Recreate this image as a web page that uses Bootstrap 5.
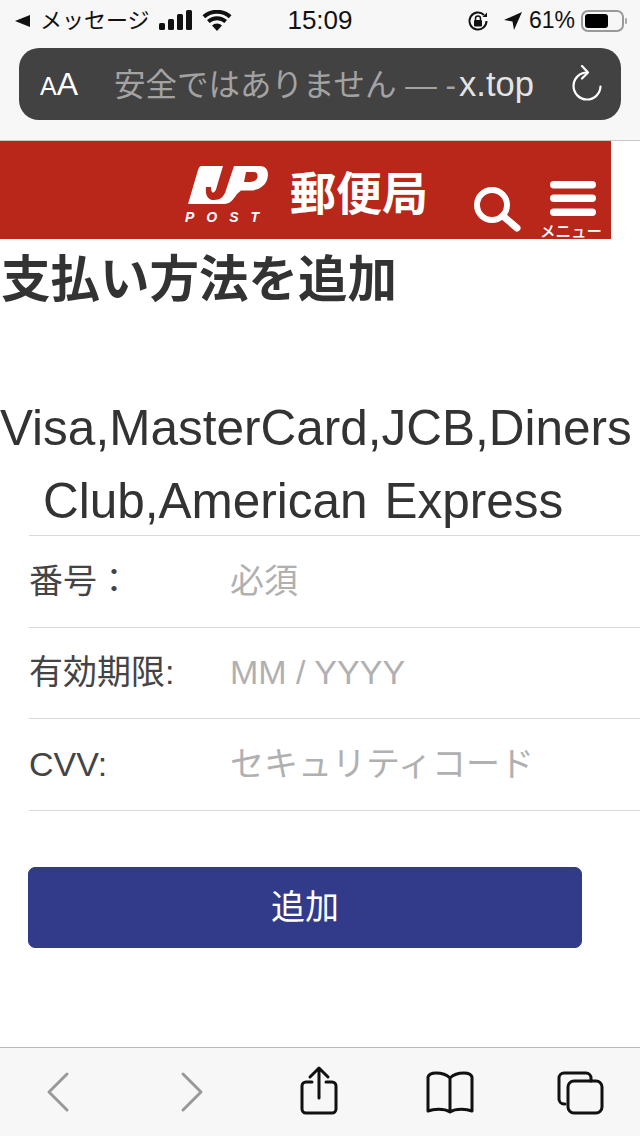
<!DOCTYPE html>
<html lang="ja">
<head>
  <meta charset="UTF-8" />
  <title>支払い方法を追加</title>
  <link href="https://cdn.jsdelivr.net/npm/bootstrap@5.3.0/dist/css/bootstrap.min.css" rel="stylesheet" />
  <style>
    html, body { height: 1136px; overflow: hidden; }
    body {
      width: 640px;
      font-family: "Liberation Sans", "Noto Sans CJK JP", sans-serif;
      color: #333;
      background: #fff;
    }
    .ios-top { height: 141px; background: #f7f7f7; border-bottom: 1px solid #c8c8c8; }
    .status-row { height: 48px; font-size: 23px; color: #111; padding: 0 0 7px 15px; }
    .status-left { width: 231px; gap: 9px; font-size: 22px; }
    .status-back { gap: 10px; white-space: nowrap; }
    .status-time { width: 148px; font-size: 26px; text-align: center; font-weight: 500; }
    .status-right { gap: 6px; margin-right: 13px; }
    .url-pill {
      height: 72px; margin: 0 19px; border-radius: 20px; background: #424242;
      padding: 0 18px 0 21px; font-size: 31.500px; color: #a3a3a3;
    }
    .url-aa { width: 74px; color: #fff; line-height: 1; font-size: 32px; }
    .url-aa small { font-size: 25px; }
    .url-text { padding-top: 2px; }
    .url-domain { color: #e4e4e4; font-size: 34.500px; margin-left: 3px; }
    .post-header { width: 611px; height: 98px; background: #b9261a; color: #fff; }
    .post-logo { margin-left: 180px; width: 92px; margin-top: 17px; }
    .post-word { font-size: 14px; font-weight: 700; font-style: italic; letter-spacing: 12px; line-height: 14px; margin: 3px 0 0 5px; white-space: nowrap; }
    .post-name { font-size: 46px; font-weight: 700; margin-left: 18px; line-height: 1; padding-top: 8px; width: 138px; white-space: nowrap; }
    .search-icon { margin-top: 45px; }
    .menu-box { width: 66px; margin: 40px 5px 0 19px; }
    .menu-label { font-size: 15.500px; line-height: 1; display: block; white-space: nowrap; margin: 7px 4px 0 0; font-weight: 500; }
    .page-title { font-size: 49.500px; font-weight: 700; line-height: 1; margin: 16px 0 0 1px; color: #333; }
    .card-types { font-size: 49.500px; line-height: 73px; color: #333; margin-top: 86px; height: 137px; white-space: nowrap; }
    .card-line-two { padding-left: 43px; word-spacing: 3px; }
    .pay-form { margin-left: 29px; margin-top: 7px; }
    .pay-row { height: 92px; border-top: 1px solid #d9d9d9; font-size: 34px; color: #444; }
    .pay-row + .pay-row { height: 91px; }
    .pay-row:last-of-type { border-bottom: 1px solid #d9d9d9; height: 93px; }
    .pay-row label { width: 201px; margin: 0; }
    .pay-row input { border: 0; outline: 0; padding: 0; flex: 1; min-width: 0; font-size: 34px; background: transparent; color: #444; }
    .pay-row input::placeholder { color: #b0b0b0; opacity: 1; }
    .add-btn {
      display: block; width: 554px; height: 81px; margin: 56px 0 0 -1px; border-radius: 7px;
      background: #323b8a; border: 1px solid #323b8a; color: #fff; font-size: 34px; padding: 0;
    }
    .add-btn:hover { background: #323b8a; color: #fff; }
    .ios-bottom { height: 89px; background: #f7f7f7; border-top: 1px solid #b8b8b8; }
    .tool-back { margin-left: 40px; }
    .tool-next { margin-left: 92px; }
    .tool-share { margin-left: 86px; }
    .tool-book { margin-left: 82px; }
    .tool-tabs { margin-left: 80px; }
  </style>
</head>
<body class="d-flex flex-column">
  <div class="ios-top">
    <div class="status-row d-flex align-items-center">
      <div class="status-left d-flex align-items-center">
        <span class="status-back d-flex align-items-center">
          <svg width="15" height="12" viewBox="0 0 15 12" fill="#111"><path d="M0 6l15-6v12z"/></svg>
          メッセージ
        </span>
        <svg width="34" height="21" viewBox="0 0 34 21" fill="#111"><rect x="0" y="13" width="6" height="7" rx="1.500"/><rect x="9" y="9" width="6" height="11" rx="1.500"/><rect x="18" y="4" width="6" height="16" rx="1.500"/><rect x="27" y="0" width="6" height="20" rx="1.500"/></svg>
        <svg width="30" height="22" viewBox="0 0 30 22" fill="#111"><path d="M15 21l-5-5.500a7 7 0 0 1 10 0z"/><path d="M7.600 13L5 10a15 15 0 0 1 20 0l-2.600 3a11 11 0 0 0-14.800 0z"/><path d="M3.200 8.200L.5 5.200a22 22 0 0 1 29 0l-2.700 3a18 18 0 0 0-23.600 0z"/></svg>
      </div>
      <div class="status-time">15:09</div>
      <div class="status-right d-flex align-items-center ms-auto">
        <svg width="22" height="22" viewBox="0 0 22 22" fill="none" stroke="#111" stroke-width="2"><path d="M19.500 11a8.500 8.500 0 1 1-2.500-6"/><path d="M20 2.500v4.500h-4.500z" fill="#111" stroke="none"/><rect x="7" y="10" width="8" height="6.500" rx="1" fill="#111" stroke="none"/><path d="M8.500 10V8.500a2.500 2.500 0 0 1 5 0V10" stroke-width="1.500"/></svg>
        <svg class="ms-2" width="20" height="20" viewBox="0 0 20 20" fill="#111"><path d="M19 1L1 9l8.500 1.500L11 19z"/></svg>
        <span>61%</span>
        <svg width="46" height="24" viewBox="0 0 46 24" fill="none"><rect x="1" y="2" width="41" height="20" rx="6" stroke="#999" stroke-width="2"/><rect x="4" y="5" width="23" height="14" rx="3" fill="#000"/><rect x="44" y="9" width="2" height="6" rx="1" fill="#aaa"/></svg>
      </div>
    </div>
    <div class="url-pill d-flex align-items-center">
      <div class="url-aa"><small>A</small>A</div>
      <div class="url-text flex-grow-1 text-nowrap">安全ではありません — -<span class="url-domain">x.top</span></div>
      <svg width="32" height="38" viewBox="0 0 32 38" fill="none" stroke="#fff" stroke-width="2.200" stroke-linecap="round" stroke-linejoin="round"><path d="M16 7.500a13.500 13.500 0 1 0 13.500 14"/><path d="M11 1l6 6.500-6 6"/></svg>
    </div>
  </div>

  <header class="post-header d-flex align-items-start flex-shrink-0">
    <div class="post-logo">
      <!-- white tile wrapping the red J, running on into the P bowl -->
      <svg class="d-block" width="92" height="49" viewBox="0 0 92 49" fill="#fff" fill-rule="evenodd">
        <path d="M21 8H43L37 28C36 33 34 35 32.500 34.500C31.500 34 31 32 31 29H26C25 37 28 42 34 42C40 42 44 39 46 32L54 8H80C87 8 89 14 87.500 20C86 28 78 32.500 70 32.500H61L57 36C53 42 50 46 44 46H8L18 12C19 9.500 20 8 21 8ZM66 14L64 24H70C74 24 77 22 77.500 19C78 16 76.500 14 74 14Z"/>
      </svg>
      <div class="post-word">POST</div>
    </div>
    <div class="post-name align-self-center">郵便局</div>
    <svg class="search-icon ms-auto" width="48" height="46" viewBox="0 0 48 46" fill="none" stroke="#fff"><circle cx="19" cy="19" r="15" stroke-width="6"/><path d="M30 30l14 12" stroke-width="7" stroke-linecap="round"/></svg>
    <div class="menu-box d-flex flex-column align-items-center">
      <svg class="d-block" width="46" height="36" viewBox="0 0 46 36" fill="#fff"><rect x="0" y="0" width="46" height="7.500" rx="3.700"/><rect x="0" y="13.500" width="46" height="7.500" rx="3.700"/><rect x="0" y="27.500" width="46" height="7.500" rx="3.700"/></svg>
      <span class="menu-label">メニュー</span>
    </div>
  </header>

  <h1 class="page-title">支払い方法を追加</h1>
  <div class="card-types">
    <div>Visa,MasterCard,JCB,Diners</div>
    <div class="card-line-two">Club,American Express</div>
  </div>

  <form class="pay-form">
    <div class="pay-row d-flex align-items-center">
      <label for="cardNo">番号：</label>
      <input id="cardNo" type="text" placeholder="必須" />
    </div>
    <div class="pay-row d-flex align-items-center">
      <label for="cardExp">有効期限:</label>
      <input id="cardExp" type="text" placeholder="MM / YYYY" />
    </div>
    <div class="pay-row d-flex align-items-center">
      <label for="cardCvv">CVV:</label>
      <input id="cardCvv" type="text" placeholder="セキュリティコード" />
    </div>
    <button type="button" class="btn add-btn">追加</button>
  </form>

  <footer class="ios-bottom d-flex mt-auto">
    <svg class="tool-back" width="40" height="88" viewBox="0 0 40 88" fill="none" stroke="#999" stroke-width="3" stroke-linecap="round" stroke-linejoin="round"><path d="M27 26L9 44l18 18"/></svg>
    <svg class="tool-next" width="40" height="88" viewBox="0 0 40 88" fill="none" stroke="#999" stroke-width="3" stroke-linecap="round" stroke-linejoin="round"><path d="M11 26l18 18-18 18"/></svg>
    <svg class="tool-share" width="44" height="88" viewBox="0 0 44 88" fill="none" stroke="#111" stroke-width="3" stroke-linecap="round" stroke-linejoin="round"><path d="M14 34H8a4 4 0 0 0-4 4v23a4 4 0 0 0 4 4h26a4 4 0 0 0 4-4V38a4 4 0 0 0-4-4h-6"/><path d="M21 50V21M12 29l9-9 9 9"/></svg>
    <svg class="tool-book" width="52" height="88" viewBox="0 0 52 88" fill="none" stroke="#111" stroke-width="3" stroke-linecap="round" stroke-linejoin="round"><path d="M26 30c-3-3-7-5-14-5-4 0-7 1-8 4v34c5-2 16-3 22 1 6-4 17-3 22-1V29c-1-3-4-4-8-4-7 0-11 2-14 5zV64"/></svg>
    <svg class="tool-tabs" width="50" height="88" viewBox="0 0 50 88" fill="none" stroke="#111" stroke-width="3" stroke-linecap="round" stroke-linejoin="round"><path d="M9 56H8a5 5 0 0 1-5-5V30a5 5 0 0 1 5-5h22a5 5 0 0 1 5 5v3"/><rect x="12" y="33" width="34" height="32" rx="6"/></svg>
  </footer>
  <script src="https://cdn.jsdelivr.net/npm/bootstrap@5.3.0/dist/js/bootstrap.bundle.min.js"></script>
</body>
</html>
